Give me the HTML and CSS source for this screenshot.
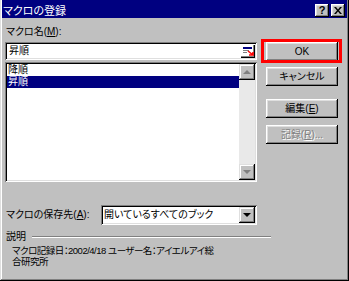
FILE: index.html
```html
<!DOCTYPE html>
<html lang="ja">
<head>
    <meta charset="UTF-8">
    <title>マクロの登録</title>
    <link rel="stylesheet" href="styles.css">
</head>
<body>
    <div class="window">
        <div class="titlebar">
            <span class="title">マクロの登録</span>
            <div class="title-buttons">
                <span class="tbtn help">?</span>
                <span class="tbtn">
                    <svg width="8" height="7" viewBox="0 0 8 7"><path d="M0 0h2l2 2.5L6 0h2L5 3.5 8 7H6L4 4.5 2 7H0l3-3.5z" fill="#000"/></svg>
                </span>
            </div>
        </div>

        <div class="content">
            <div class="top">
                <div class="left">
                    <div class="label">マクロ名(<u>M</u>):</div>
                    <div class="field name-field">
                        <span class="field-text">昇順</span>
                        <span class="refbtn">
                            <svg width="11" height="9" viewBox="0 0 11 9">
                                <rect x="0" y="0" width="9" height="2" fill="#000080"/>
                                <rect x="0" y="3" width="6" height="1" fill="#808080"/>
                                <rect x="0" y="5" width="4" height="1" fill="#808080"/>
                                <path d="M5 4l5 4M6 8h4V5" stroke="#ff0000" stroke-width="1.6" fill="none"/>
                            </svg>
                        </span>
                    </div>
                    <div class="listbox">
                        <div class="items">
                            <div class="item">降順</div>
                            <div class="item selected">昇順</div>
                        </div>
                        <div class="scrollbar">
                            <span class="sbtn"><span class="arrow up"></span></span>
                            <span class="track"></span>
                            <span class="sbtn"><span class="arrow down"></span></span>
                        </div>
                    </div>
                </div>

                <div class="right">
                    <div class="ok-wrap"><button class="btn">OK</button></div>
                    <button class="btn cancel">キャンセル</button>
                    <button class="btn edit">編集(<u>E</u>)</button>
                    <button class="btn record" disabled>記録(<u>R</u>)...</button>
                </div>
            </div>

            <div class="save-row">
                <span class="save-label">マクロの保存先(<u>A</u>):</span>
                <div class="field combo">
                    <span class="field-text">開いているすべてのブック</span>
                    <span class="dropbtn"><span class="arrow down black"></span></span>
                </div>
            </div>

            <div class="desc">
                <div class="desc-head">
                    <span>説明</span>
                    <span class="groove"></span>
                </div>
                <div class="desc-text">マクロ記録日：2002/4/18 ユーザー名：アイエルアイ総<br>合研究所</div>
            </div>
        </div>
    </div>
</body>
</html>
```

FILE: styles.css
```css
body {
    margin: 0;
    background: #c0c0c0;
    font-family: "Liberation Sans", "Noto Sans CJK JP", sans-serif;
    font-size: 10px;
    font-feature-settings: "palt";
    color: #000;
}

.window {
    width: 349px;
    height: 281px;
    box-sizing: border-box;
    padding: 0 2px 3px 2px;
    background: #c0c0c0;
    box-shadow: inset -1px -1px #000, inset 1px 0 #dfdfdf, inset -2px -2px #808080, inset 2px 0 #fff;
    display: flex;
    flex-direction: column;
}

/* title bar */
.titlebar {
    height: 18px;
    background: #000080;
    color: #fff;
    display: flex;
    align-items: center;
    justify-content: space-between;
    padding: 0 2px 0 1px;
}

.title {
    font-size: 11px;
    line-height: 14px;
    padding-top: 3px;
}

.title-buttons {
    display: flex;
    gap: 2px;
    padding-top: 3px;
}

.tbtn {
    width: 14px;
    height: 13px;
    background: #c0c0c0;
    box-shadow: inset -1px -1px #000, inset 1px 1px #fff, inset -2px -2px #808080, inset 2px 2px #dfdfdf;
    color: #000;
    display: flex;
    align-items: center;
    justify-content: center;
}

.help {
    font-weight: bold;
    font-size: 11px;
    line-height: 11px;
}

/* main area */
.content {
    padding: 7px 0 0 3px;
}

.top {
    display: flex;
    gap: 9px;
}

.left {
    width: 252px;
}

.label {
    line-height: 14px;
    height: 14px;
    padding-left: 1px;
    margin-bottom: 3px;
}

.field {
    background: #fff;
    box-shadow: inset 1px 1px #808080, inset -1px -1px #fff, inset 2px 2px #000, inset -2px -2px #dfdfdf;
    display: flex;
    align-items: center;
    justify-content: space-between;
    box-sizing: border-box;
}

.name-field {
    height: 18px;
    padding: 2px 2px 2px 4px;
}

.field-text {
    line-height: 14px;
}

.refbtn {
    width: 14px;
    height: 13px;
    display: flex;
    align-items: center;
    justify-content: center;
    box-shadow: inset -1px -1px #000, inset -2px -2px #808080;
}

.listbox {
    margin-top: 2px;
    height: 120px;
    display: flex;
    box-sizing: border-box;
    padding: 2px;
    background: #fff;
    box-shadow: inset 1px 1px #808080, inset -1px -1px #fff, inset 2px 2px #000, inset -2px -2px #dfdfdf;
}

.items {
    flex: 1;
}

.item {
    height: 12px;
    line-height: 12px;
    padding-left: 1px;
}

.selected {
    background: #000080;
    color: #fff;
}

.scrollbar {
    width: 16px;
    display: flex;
    flex-direction: column;
}

.sbtn {
    height: 16px;
    background: #c0c0c0;
    box-shadow: inset -1px -1px #000, inset 1px 1px #dfdfdf, inset -2px -2px #808080, inset 2px 2px #fff;
    display: flex;
    align-items: center;
    justify-content: center;
}

.track {
    flex: 1;
    background: #e9e9e9;
}

.arrow {
    width: 0;
    height: 0;
    border-left: 4px solid transparent;
    border-right: 4px solid transparent;
}

.arrow.up {
    border-bottom: 4px solid #808080;
}

.arrow.down {
    border-top: 4px solid #808080;
}

.arrow.black {
    border-top-color: #000;
}

/* buttons */
.right {
    width: 72px;
    display: flex;
    flex-direction: column;
    padding-top: 17px;
}

.btn {
    width: 72px;
    height: 19px;
    padding: 0;
    border: none;
    background: #c0c0c0;
    box-shadow: inset -1px -1px #000, inset 1px 1px #fff, inset -2px -2px #808080, inset 2px 2px #dfdfdf;
    font-family: "Liberation Sans", "Noto Sans CJK JP", sans-serif;
    font-size: 10px;
    font-feature-settings: "palt";
    line-height: 14px;
    color: #000;
}

.ok-wrap {
    position: relative;
    height: 19px;
}

.ok-wrap::after {
    content: "";
    position: absolute;
    top: -3px;
    bottom: -2px;
    left: -5px;
    right: -4px;
    border: 3px solid #ff0000;
}

.cancel {
    margin-top: 6px;
}

.edit {
    margin-top: 13px;
}

.record {
    margin-top: 7px;
    color: #808080;
    text-shadow: 1px 1px #fff;
}

/* save location */
.save-row {
    margin-top: 23px;
    display: flex;
    align-items: center;
    width: 252px;
}

.save-label {
    width: 95px;
    padding-left: 1px;
    line-height: 14px;
}

.combo {
    flex: 1;
    height: 20px;
    padding: 2px 2px 2px 3px;
}

.dropbtn {
    width: 16px;
    height: 16px;
    background: #c0c0c0;
    box-shadow: inset -1px -1px #000, inset 1px 1px #dfdfdf, inset -2px -2px #808080, inset 2px 2px #fff;
    display: flex;
    align-items: center;
    justify-content: center;
}

/* description */
.desc {
    margin-top: 6px;
    padding-left: 1px;
}

.desc-head {
    display: flex;
    align-items: center;
    width: 265px;
    line-height: 12px;
}

.groove {
    flex: 1;
    margin-left: 6px;
    border-top: 1px solid #808080;
    border-bottom: 1px solid #fff;
    box-sizing: border-box;
    height: 2px;
}

.desc-text {
    margin-top: 2px;
    padding-left: 6px;
    font-size: 9.5px;
    line-height: 11px;
    letter-spacing: -0.5px;
}
```
